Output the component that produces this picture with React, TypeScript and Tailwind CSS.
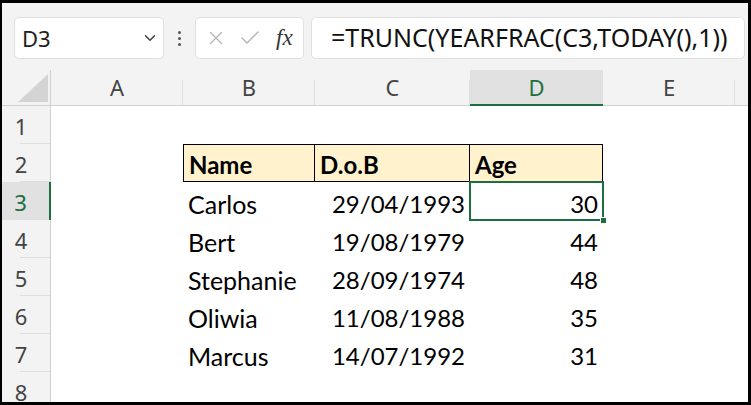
import { ChevronDown, X, Check } from 'lucide-react'

const COLS = ['A', 'B', 'C', 'D', 'E']

const ROWS = [
  { name: 'Carlos', dob: '29/04/1993', age: 30 },
  { name: 'Bert', dob: '19/08/1979', age: 44 },
  { name: 'Stephanie', dob: '28/09/1974', age: 48 },
  { name: 'Oliwia', dob: '11/08/1988', age: 35 },
  { name: 'Marcus', dob: '14/07/1992', age: 31 },
]

const UI_FONT = "font-['Noto_Sans',sans-serif]"
const CELL_FONT = "font-['Lato',sans-serif]"

function RowHeader({ n, active }: { n: number; active?: boolean }) {
  return (
    <div
      className={`relative flex h-[38px] items-center justify-center pt-[2px] text-[22px] ${UI_FONT} ${
        active ? 'bg-[#e1e1e1] text-[#1e6e42] border-r-2 border-[#1e6e42]' : 'bg-[#f3f3f3] text-[#444] border-r border-[#cfcfcf]'
      }`}
    >
      <span className="pr-[10px]">{n}</span>
      <div className="absolute bottom-0 left-[18px] right-0 h-px bg-[#dedede]" />
    </div>
  )
}

export default function App() {
  return (
    <div className="h-[405px] w-[751px] overflow-hidden bg-black pb-[3px] pl-[2px] pr-[3px] pt-[3px]">
      <div className="flex h-full flex-col overflow-hidden bg-white">
        {/* formula bar */}
        <div className="flex h-[67px] shrink-0 items-start bg-[#f3f3f3] pl-[12px] pr-[3px] pt-[14px]">
          <div className={`flex h-[42px] w-[150px] items-center justify-between rounded-[5px] border border-[#e0e0e0] bg-white pl-[7px] pr-[4px] text-[22px] text-[#222] ${UI_FONT}`}>
            <span>D3</span>
            <ChevronDown className="h-[18px] w-[18px] text-[#444]" strokeWidth={2} />
          </div>
          <div className="flex h-[42px] w-[31px] flex-col items-center justify-center gap-[3px]">
            <div className="h-[3px] w-[3px] rounded-full bg-[#555]" />
            <div className="h-[3px] w-[3px] rounded-full bg-[#555]" />
            <div className="h-[3px] w-[3px] rounded-full bg-[#555]" />
          </div>
          <div className="flex h-[42px] w-[109px] items-center rounded-[5px] border border-[#e0e0e0] bg-white pl-[9px]">
            <X className="h-[22px] w-[22px] text-[#b4b4b4]" strokeWidth={1.4} />
            <Check className="ml-[11px] h-[24px] w-[24px] text-[#b4b4b4]" strokeWidth={1.4} />
            <span className="ml-[14px] font-['Liberation_Serif',serif] text-[23px] italic text-[#333]">fx</span>
          </div>
          <div className={`ml-[7px] flex h-[42px] flex-1 items-center rounded-[5px] border border-[#e0e0e0] bg-white pl-[19px] text-[25px] text-[#111] ${UI_FONT}`}>
            =TRUNC(YEARFRAC(C3,TODAY(),1))
          </div>
        </div>

        {/* grid */}
        <div className="grid shrink-0 grid-cols-[49px_132px_132px_155px_133px_132px_1fr] grid-rows-[36px_repeat(8,38px)]">
          {/* header row */}
          <div className="relative border-b border-r border-[#cfcfcf] bg-[#f3f3f3]">
            <svg className="absolute bottom-[3px] right-[2px]" width="30" height="28" viewBox="0 0 30 28">
              <polygon points="30,0 30,28 0,28" fill="#d4d4d4" />
            </svg>
          </div>
          {COLS.map((c) => (
            <div
              key={c}
              className={`relative flex items-center justify-center text-[22px] ${UI_FONT} ${
                c === 'D'
                  ? 'bg-[#e1e1e1] text-[#1e6e42] border-b-2 border-[#1e6e42]'
                  : 'bg-[#f3f3f3] text-[#444] border-b border-[#cfcfcf]'
              }`}
            >
              {c}
              <div className="absolute bottom-0 right-0 top-[10px] w-px bg-[#dedede]" />
            </div>
          ))}
          <div className="border-b border-[#cfcfcf] bg-[#f3f3f3]" />

          {/* row 1 */}
          <RowHeader n={1} />
          <div className="col-span-6" />

          {/* row 2 - table header */}
          <RowHeader n={2} />
          <div />
          {['Name', 'D.o.B', 'Age'].map((h, i) => (
            <div
              key={h}
              className={`flex items-end border-y border-black bg-[#fff2cc] pl-[5px] text-[24px] font-bold leading-[32px] text-black ${CELL_FONT} ${
                i === 0 ? 'border-x' : 'border-r'
              }`}
            >
              {h}
            </div>
          ))}
          <div className="col-span-2" />

          {/* data rows */}
          {ROWS.map((r, i) => (
            <div key={r.name} className="contents">
              <RowHeader n={i + 3} active={i === 0} />
              <div />
              <div className={`flex items-end pl-[5px] text-[25px] leading-[32px] text-black ${CELL_FONT}`}>{r.name}</div>
              <div className={`flex items-end justify-end pr-[5px] text-[24px] leading-[32px] text-black ${CELL_FONT}`}>{r.dob}</div>
              <div
                className={`relative flex items-end justify-end pr-[5px] text-[24px] leading-[32px] text-black ${CELL_FONT} ${
                  i === 0 ? 'outline-2 -outline-offset-1 outline-[#1e6e42]' : ''
                }`}
              >
                {r.age}
                {i === 0 && <div className="absolute -bottom-[4px] -right-[4px] h-[7px] w-[7px] border border-white bg-[#1e6e42]" />}
              </div>
              <div className="col-span-2" />
            </div>
          ))}

          {/* row 8 */}
          <RowHeader n={8} />
          <div className="col-span-6" />
        </div>
      </div>
    </div>
  )
}
